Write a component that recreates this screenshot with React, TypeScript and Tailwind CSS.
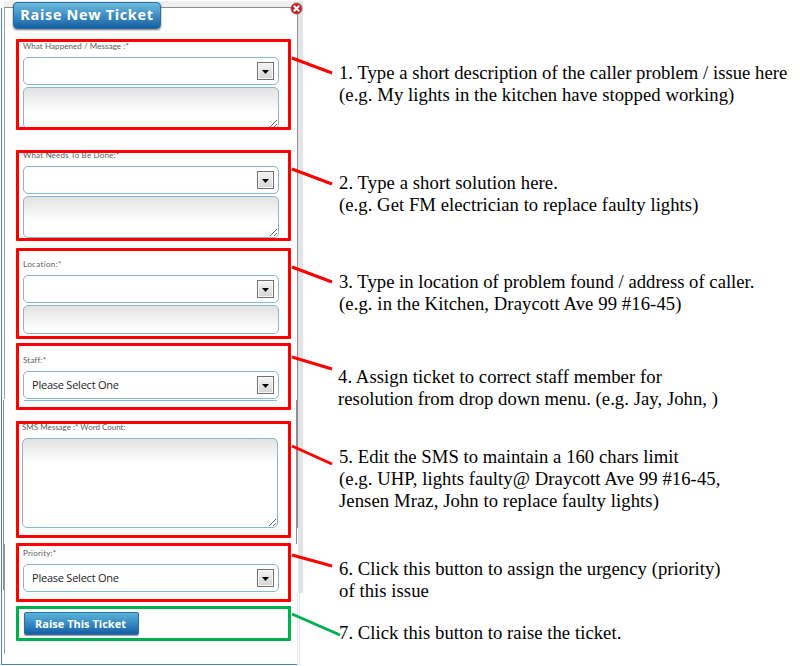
import React from "react";

const fieldBorder = "border border-[#86b7cc]";

function Label({ children, className }: { children: React.ReactNode; className: string }) {
  return (
    <div className={"h-[10px] shrink-0 whitespace-pre font-['Lato',sans-serif] text-[8px] leading-[10px] text-[#5a5a5a] " + className}>
      {children}
    </div>
  );
}

function Select({ text, className }: { text?: string; className?: string }) {
  return (
    <div className={"flex h-[28px] w-[256px] shrink-0 items-center justify-between rounded-[5px] bg-white pr-[4px] pl-[8px] " + fieldBorder + " " + (className ?? "")}>
      <span className="whitespace-pre font-['Open_Sans',sans-serif] text-[11px] tracking-[-0.23px] text-[#1c1c1c]">{text}</span>
      <span className="flex h-[18px] w-[17px] items-center justify-center border border-[#707070] bg-gradient-to-b from-[#f4f4f4] to-[#d4d4d4] shadow-[inset_0_0_0_1px_#f8f8f8]">
        <svg width="7" height="4" viewBox="0 0 7 4" className="mt-[2px]">
          <path d="M0 0H7L3.5 4Z" fill="#000" />
        </svg>
      </span>
    </div>
  );
}

function Area({ className, grip = true }: { className: string; grip?: boolean }) {
  return (
    <div className={"flex w-[256px] shrink-0 items-end justify-end rounded-[5px] bg-white bg-[linear-gradient(#e2e2e2,#ffffff_24px)] " + fieldBorder + " " + className}>
      {grip && (
        <svg width="9" height="9" viewBox="0 0 9 9" fill="none" stroke="#555" strokeWidth="0.9">
          <path d="M1 8L8 1M5 8L8 5" />
        </svg>
      )}
    </div>
  );
}

function Box({ className, children }: { className: string; children: React.ReactNode }) {
  return (
    <section className={"flex w-[275px] shrink-0 flex-col overflow-hidden rounded-[1px] border-[3px] pl-[4px] " + className}>
      {children}
    </section>
  );
}

function Note({ lines, className }: { lines: [string, string][]; className: string }) {
  return (
    <div className={"font-['Liberation_Serif',serif] text-[18.67px] leading-[22px] text-black " + className}>
      {lines.map(([text, spacing]) => (
        <p key={text} className={"whitespace-pre " + spacing}>{text}</p>
      ))}
    </div>
  );
}

export default function App() {
  return (
    <div className="relative flex h-[666px] w-[800px] overflow-hidden bg-white">
      <div className="relative h-[666px] w-[304px] shrink-0">
        <svg className="absolute inset-0" width="304" height="666" shapeRendering="crispEdges">
          <rect x="4" y="1" width="299" height="6" fill="#f0f0f0" />
          <rect x="298" y="1" width="5" height="592" fill="#e1e3e6" />
          <rect x="297" y="593" width="1" height="72" fill="#dfe5ef" />
          <rect x="299" y="593" width="1" height="72" fill="#dfe5ef" />
          <rect x="1" y="8" width="1" height="657" fill="#4d83bb" />
          <rect x="1" y="664" width="296" height="1" fill="#4d83bb" />
          <rect x="5" y="7" width="293" height="1" fill="#8d8d8d" />
          <rect x="4" y="7" width="1" height="392" fill="#a0a0a0" />
          <rect x="297" y="7" width="1" height="393" fill="#8d8d8d" />
          <rect x="3" y="400" width="1" height="190" fill="#8d8d8d" />
          <rect x="4" y="544" width="1" height="110" fill="#9a9a9a" />
          <rect x="296" y="400" width="2" height="128" fill="#8d8d8d" />
          <rect x="296" y="528" width="1" height="16" fill="#8d8d8d" />
        </svg>
        <div className="relative flex flex-col pl-[16px]">
          <header className="-ml-[3px] mt-[2px] flex h-[27px] w-[148px] items-center justify-center rounded-[4px] border border-[#2a6ea2] bg-gradient-to-b from-[#6cbcdf] to-[#1260a4] shadow-[0_1px_2px_#777]">
            <h1 className="-mt-px whitespace-pre font-['Open_Sans',sans-serif] text-[14.5px] font-bold leading-[20px] tracking-[0.65px] text-white">Raise New Ticket</h1>
          </header>
          <Box className="mt-[10px] h-[91px] border-[#ff0000]">
            <Label className="-mt-px tracking-[0.08px]">What Happened / Message :*</Label>
            <Select className="mt-[6px]" />
            <Area className="mt-[2px] h-[42px]" />
          </Box>
          <Box className="mt-[20px] h-[91px] border-[#ff0000]">
            <Label className="-mt-[3px] tracking-[0.18px]">What Needs To Be Done:*</Label>
            <Select className="mt-[6px]" />
            <Area className="mt-[2px] h-[42px]" />
          </Box>
          <Box className="mt-[7px] h-[91px] border-[#ff0000]">
            <Label className="mt-[8px] tracking-[0.35px]">Location:*</Label>
            <Select className="mt-[6px]" />
            <Area className="mt-[2px] h-[29px]" grip={false} />
          </Box>
          <Box className="mt-[4px] h-[67px] border-[#ff0000]">
            <Label className="mt-[9px] tracking-[0.2px]">Staff:*</Label>
            <Select className="mt-[6px]" text="Please Select One" />
            <div className="ml-px mt-px h-px w-[253px] shrink-0 bg-[#86b7cc]" />
          </Box>
          <Box className="mt-[11px] h-[117px] border-[#ff0000]">
            <Label className="-ml-px -mt-[2px]">SMS Message :* Word Count:</Label>
            <Area className="-ml-px mt-[6px] h-[90px]" />
          </Box>
          <Box className="mt-[5px] h-[59px] border-[#ff0000]">
            <Label className="mt-[2px] tracking-[0.2px]">Priority:*</Label>
            <Select className="mt-[6px]" text="Please Select One" />
          </Box>
          <Box className="mt-[4px] h-[35px] border-[#00b050]">
            <button className="ml-px mt-[3px] flex h-[23px] w-[115px] items-center justify-center rounded-[2px] border border-[#2a6ea2] bg-gradient-to-b from-[#5cb4da] to-[#1260a4] pr-[2px] pt-px font-['Open_Sans',sans-serif] text-[11px] font-bold text-white shadow-[0_1px_1px_#999]">
              Raise This Ticket
            </button>
          </Box>
        </div>
        <svg className="absolute left-[290px] top-[2px]" width="13" height="13" viewBox="0 0 13 13">
          <circle cx="6.5" cy="6.5" r="5.5" fill="#cc1a20" stroke="#a0555a" strokeWidth="0.8" />
          <path d="M3.8 3.8L9.2 9.2M9.2 3.8L3.8 9.2" stroke="#fff" strokeWidth="2.1" />
        </svg>
      </div>
      <main className="flex flex-col pl-[35px] pt-[62px]">
        <Note className="" lines={[["1. Type a short description of the caller problem / issue here", "tracking-[0.02px]"], ["(e.g. My lights in the kitchen have stopped working)", "tracking-[0.07px]"]]} />
        <Note className="mt-[66px]" lines={[["2. Type a short solution here.", "tracking-[0.08px]"], ["(e.g. Get FM electrician to replace faulty lights)", "tracking-[0.05px]"]]} />
        <Note className="mt-[55px]" lines={[["3. Type in location of problem found / address of caller.", "tracking-[0.01px]"], ["(e.g. in the Kitchen, Draycott Ave 99 #16-45)", "tracking-[0.09px]"]]} />
        <Note className="-ml-px mt-[51px]" lines={[["4. Assign ticket to correct staff member for", "tracking-[0.07px]"], ["resolution from drop down menu. (e.g. Jay, John, )", "tracking-[0.05px]"]]} />
        <Note className="mt-[36px]" lines={[["5. Edit the SMS to maintain a 160 chars limit", "tracking-[0.04px]"], ["(e.g. UHP, lights faulty@ Draycott Ave 99 #16-45,", "tracking-[0.07px]"], ["Jensen Mraz, John to replace faulty lights)", "tracking-[0.08px]"]]} />
        <Note className="mt-[46px]" lines={[["6. Click this button to assign the urgency (priority)", "tracking-[0.06px]"], ["of this issue", "tracking-[0.06px]"]]} />
        <Note className="mt-[20px]" lines={[["7. Click this button to raise the ticket.", "tracking-[0.05px]"]]} />
      </main>
      <svg className="absolute inset-0" width="800" height="666" fill="none" strokeWidth="3">
        <path stroke="#ff0000" d="M292 58L332 73M292 169L332 184M292 267L332 282M292 357L332 369M292 446L332 464M292 555L332 566" />
        <path stroke="#00b050" d="M292 614L340 635" />
      </svg>
    </div>
  );
}
